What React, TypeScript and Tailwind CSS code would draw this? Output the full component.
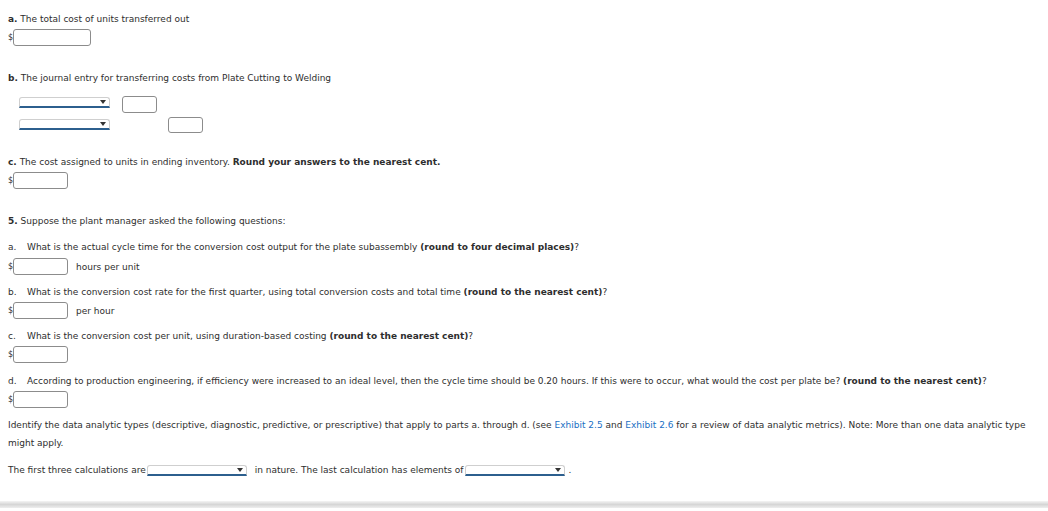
import React from "react";

const Money = ({ w = "w-[55px]", after }: { w?: string; after?: string }) => (
  <div className="flex h-[17px] items-center">
    <span className="w-[5px] text-[8px]">$</span>
    <div className={`h-[17px] ${w} rounded-[3px] border border-[#8c8c8c] bg-white`} />
    {after && <span className="ml-[8px]">{after}</span>}
  </div>
);

const Select = ({ w }: { w: string }) => (
  <div
    className={`relative h-[11px] shrink-0 ${w} rounded-t-[3px] border border-b-2 border-[#cfcfcf] border-b-[#2c5f8e] bg-white`}
  >
    <span className="absolute right-[3px] top-[2px] h-0 w-0 border-x-[3px] border-t-[4px] border-x-transparent border-t-[#333]" />
  </div>
);

const Q = ({ l, children }: { l: string; children: React.ReactNode }) => (
  <p className="flex h-[10px] items-center whitespace-nowrap">
    <span className="w-[19px]">{l}</span>
    <span>{children}</span>
  </p>
);

export default function App() {
  return (
    <div className="min-h-[511px] bg-white">
      <div
        className="px-[8px] pt-[14px] text-[9px] leading-[10px] text-[#2e2e2e]"
        style={{ fontFamily: '"DejaVu Sans", Verdana, sans-serif' }}
      >
        <p className="h-[10px]">
          <b>a.</b> The total cost of units transferred out
        </p>
        <div className="mt-[5px]">
          <Money w="w-[78px]" />
        </div>

        <p className="mt-[27px] h-[10px]">
          <b>b.</b> The journal entry for transferring costs from Plate Cutting to Welding
        </p>
        <div className="mt-[13px] flex h-[17px] items-start pl-[11px]">
          <div className="mt-[1px]">
            <Select w="w-[91px]" />
          </div>
          <div className="ml-[12px] h-[17px] w-[35px] rounded-[3px] border border-[#8c8c8c]" />
        </div>
        <div className="mt-[4px] flex h-[16px] items-start pl-[11px]">
          <div className="mt-[2px]">
            <Select w="w-[91px]" />
          </div>
          <div className="ml-[58px] h-[16px] w-[35px] rounded-[3px] border border-[#8c8c8c]" />
        </div>

        <p className="mt-[24px] h-[10px]">
          <b>c.</b> The cost assigned to units in ending inventory.{" "}
          <b>Round your answers to the nearest cent.</b>
        </p>
        <div className="mt-[5px]">
          <Money />
        </div>

        <p className="mt-[27px] h-[10px]">
          <b>5.</b> Suppose the plant manager asked the following questions:
        </p>

        <div className="mt-[16px]">
          <Q l="a.">
            What is the actual cycle time for the conversion cost output for the plate subassembly{" "}
            <b>(round to four decimal places)</b>?
          </Q>
        </div>
        <div className="mt-[6px]">
          <Money after="hours per unit" />
        </div>

        <div className="mt-[12px]">
          <Q l="b.">
            What is the conversion cost rate for the first quarter, using total conversion costs and total time{" "}
            <b>(round to the nearest cent)</b>?
          </Q>
        </div>
        <div className="mt-[5px]">
          <Money after="per hour" />
        </div>

        <div className="mt-[12px]">
          <Q l="c.">
            What is the conversion cost per unit, using duration-based costing{" "}
            <b>(round to the nearest cent)</b>?
          </Q>
        </div>
        <div className="mt-[5px]">
          <Money />
        </div>

        <div className="mt-[13px]">
          <Q l="d.">
            According to production engineering, if efficiency were increased to an ideal level, then the cycle time should be 0.20 hours. If this were to occur, what would the cost per plate be?{" "}
            <b>(round to the nearest cent)</b>?
          </Q>
        </div>
        <div className="mt-[5px]">
          <Money />
        </div>

        <p className="mt-[8px] leading-[18px]">
          Identify the data analytic types (descriptive, diagnostic, predictive, or prescriptive) that apply to parts a. through d. (see{" "}
          <span className="text-[#1a6fc4]">Exhibit 2.5</span> and{" "}
          <span className="text-[#1a6fc4]">Exhibit 2.6</span> for a review of data analytic metrics). Note: More than one data analytic type might apply.
        </p>

        <div className="mt-[12px] flex h-[12px] items-center whitespace-nowrap">
          <span>The first three calculations are</span>
          <Select w="ml-[1px] w-[100px]" />
          <span className="ml-[8px]">in nature. The last calculation has elements of</span>
          <Select w="ml-[1px] w-[100px]" />
          <span className="ml-[4px]">.</span>
        </div>
      </div>
      <div className="mt-[25px] h-[7px] bg-gradient-to-b from-[#f4f4f4] via-[#d6d6d6] to-[#eeeeee]" />
    </div>
  );
}
